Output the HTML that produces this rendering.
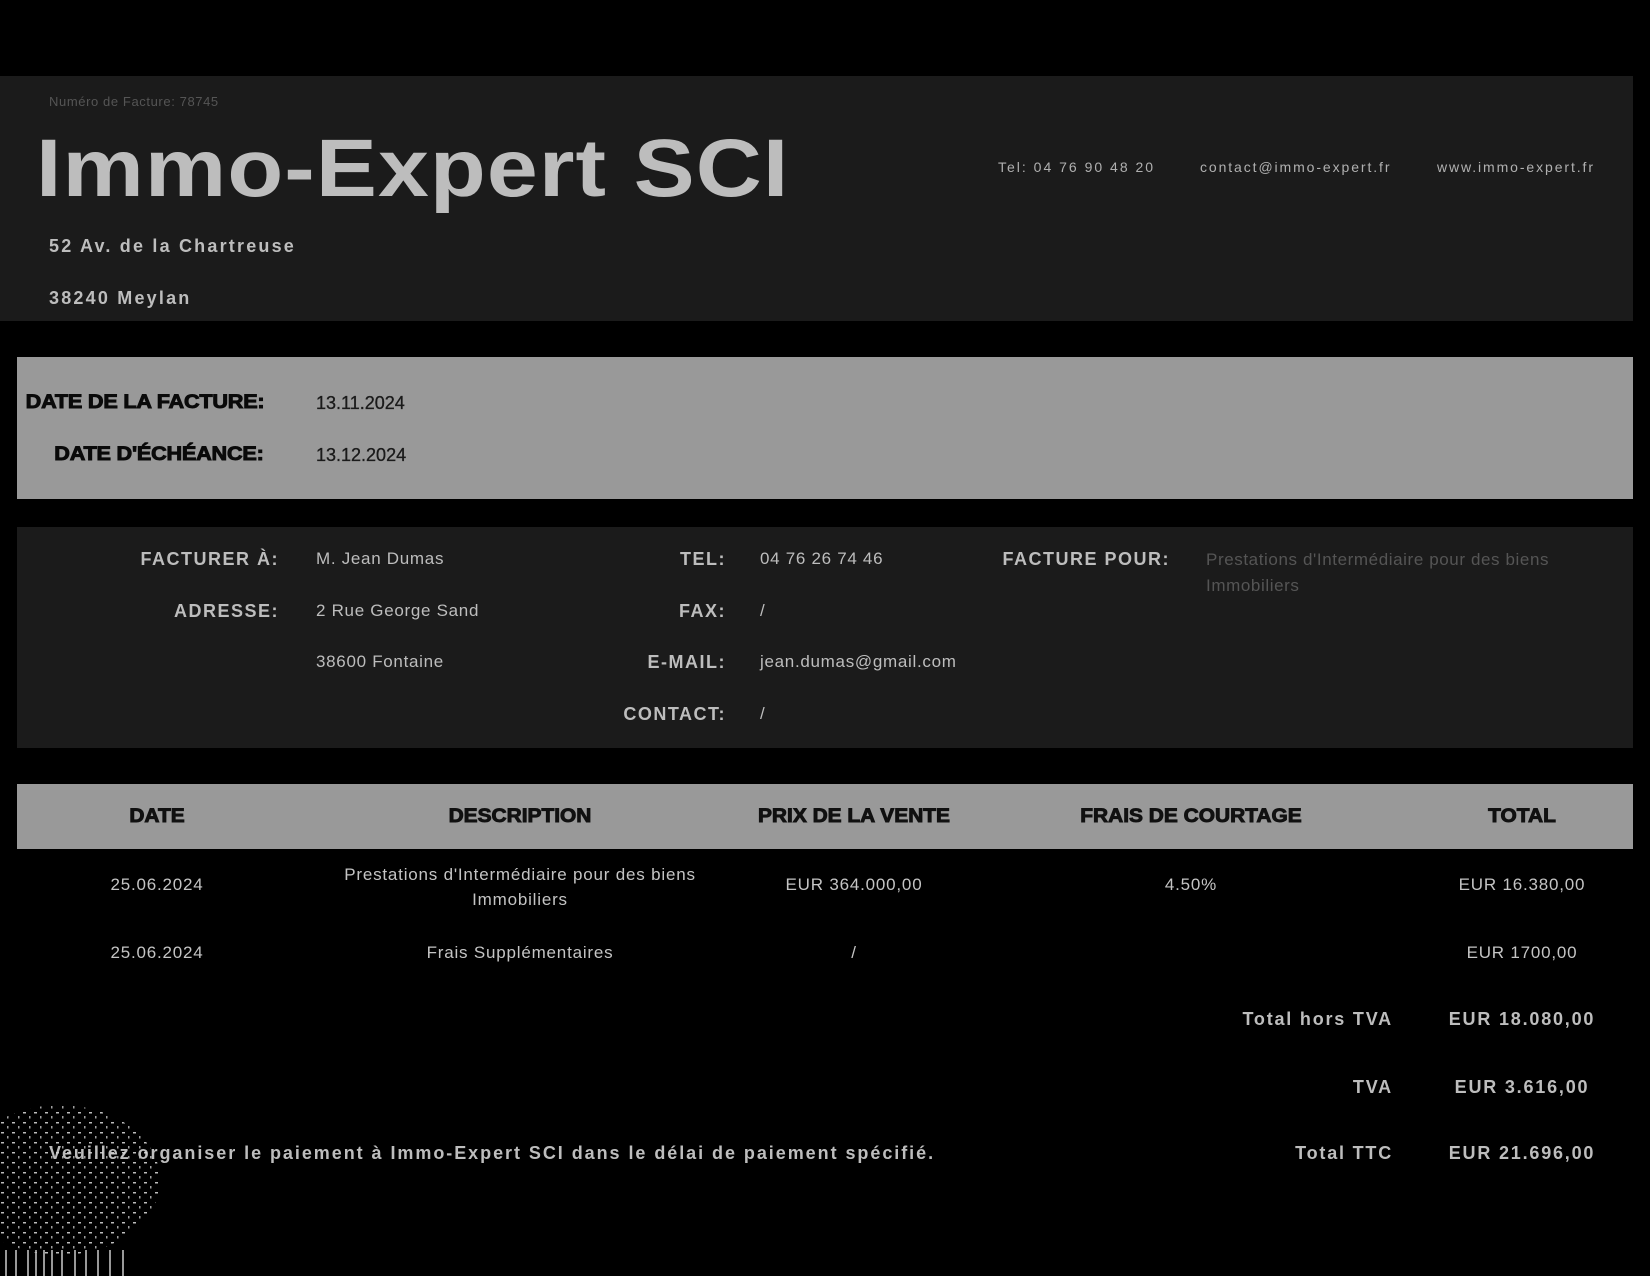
<!DOCTYPE html>
<html><head><meta charset="utf-8"><style>
*{margin:0;padding:0;box-sizing:border-box}
body{width:1650px;height:1276px;background:#000;position:relative;overflow:hidden;font-family:"Liberation Sans",sans-serif}
.a{position:absolute;white-space:nowrap}
.box{position:absolute}
.lbl{font-weight:bold;color:#bdbdbd;font-size:18px;letter-spacing:1.5px;text-align:right}
.val{color:#bdbdbd;font-size:17px;letter-spacing:0.7px}
.blk{font-weight:900;color:#0a0a0a;font-size:19px;-webkit-text-stroke:0.9px #0a0a0a;letter-spacing:-0.2px;transform:scaleX(1.14);transform-origin:right center}
.th{font-weight:900;color:#111;font-size:19px;-webkit-text-stroke:0.9px #111;text-align:center;width:400px;margin-left:-200px;transform:scaleX(1.1)}
.td{color:#c4c4c4;font-size:17px;text-align:center;width:420px;margin-left:-210px;letter-spacing:0.8px}
.tl{font-weight:bold;color:#bdbdbd;font-size:18px;letter-spacing:1.8px}
</style></head><body>
<div class="box" style="left:0;top:76px;width:1633px;height:245px;background:#1b1b1b"></div>
<div class="a" style="left:49px;top:94px;font-size:13px;color:#555;letter-spacing:0.6px">Numéro de Facture: 78745</div>
<div class="a" style="left:36px;top:122px;font-size:82px;font-weight:bold;color:#bdbdbd;letter-spacing:1px;transform:scaleX(1.115);transform-origin:left center">Immo-Expert SCI</div>
<div class="a" style="left:49px;top:236px;font-size:18px;font-weight:bold;color:#bdbdbd;letter-spacing:2.2px">52 Av. de la Chartreuse</div>
<div class="a" style="left:49px;top:288px;font-size:18px;font-weight:bold;color:#bdbdbd;letter-spacing:2.2px">38240 Meylan</div>
<div class="a" style="left:998px;top:159px;font-size:14px;color:#b0b0b0;letter-spacing:2px">Tel: 04 76 90 48 20</div>
<div class="a" style="left:1200px;top:159px;font-size:14px;color:#b0b0b0;letter-spacing:1.9px">contact@immo-expert.fr</div>
<div class="a" style="left:1437px;top:159px;font-size:14px;color:#b0b0b0;letter-spacing:1.9px">www.immo-expert.fr</div>

<div class="box" style="left:17px;top:357px;width:1616px;height:142px;background:#999"></div>
<div class="a blk" style="right:1386px;top:392px">DATE DE LA FACTURE:</div>
<div class="a blk" style="right:1386px;top:444px">DATE D'ÉCHÉANCE:</div>
<div class="a" style="left:316px;top:393px;font-size:18px;color:#1a1a1a;-webkit-text-stroke:0.3px #1a1a1a">13.11.2024</div>
<div class="a" style="left:316px;top:445px;font-size:18px;color:#1a1a1a;-webkit-text-stroke:0.3px #1a1a1a">13.12.2024</div>

<div class="box" style="left:17px;top:527px;width:1616px;height:221px;background:#1b1b1b"></div>
<div class="a lbl" style="right:1371px;top:549px">FACTURER À:</div>
<div class="a lbl" style="right:1371px;top:601px">ADRESSE:</div>
<div class="a val" style="left:316px;top:549px">M. Jean Dumas</div>
<div class="a val" style="left:316px;top:601px">2 Rue George Sand</div>
<div class="a val" style="left:316px;top:652px">38600 Fontaine</div>
<div class="a lbl" style="right:924px;top:549px">TEL:</div>
<div class="a lbl" style="right:924px;top:601px">FAX:</div>
<div class="a lbl" style="right:924px;top:652px">E-MAIL:</div>
<div class="a lbl" style="right:924px;top:704px">CONTACT:</div>
<div class="a val" style="left:760px;top:549px">04 76 26 74 46</div>
<div class="a val" style="left:760px;top:601px">/</div>
<div class="a val" style="left:760px;top:652px">jean.dumas@gmail.com</div>
<div class="a val" style="left:760px;top:704px">/</div>
<div class="a lbl" style="right:480px;top:549px">FACTURE POUR:</div>
<div class="a" style="left:1206px;top:547px;font-size:17px;color:#555;line-height:26px;white-space:normal;width:400px;letter-spacing:0.6px">Prestations d'Intermédiaire pour des biens Immobiliers</div>

<div class="box" style="left:17px;top:784px;width:1616px;height:65px;background:#999"></div>
<div class="a th" style="left:157px;top:806px">DATE</div>
<div class="a th" style="left:520px;top:806px">DESCRIPTION</div>
<div class="a th" style="left:854px;top:806px">PRIX DE LA VENTE</div>
<div class="a th" style="left:1191px;top:806px">FRAIS DE COURTAGE</div>
<div class="a th" style="left:1522px;top:806px">TOTAL</div>

<div class="a td" style="left:157px;top:875px">25.06.2024</div>
<div class="a td" style="left:520px;top:862px;white-space:normal;line-height:25px">Prestations d'Intermédiaire pour des biens<br>Immobiliers</div>
<div class="a td" style="left:854px;top:875px">EUR 364.000,00</div>
<div class="a td" style="left:1191px;top:875px">4.50%</div>
<div class="a td" style="left:1522px;top:875px">EUR 16.380,00</div>
<div class="a td" style="left:157px;top:943px">25.06.2024</div>
<div class="a td" style="left:520px;top:943px">Frais Supplémentaires</div>
<div class="a td" style="left:854px;top:943px">/</div>
<div class="a td" style="left:1522px;top:943px">EUR 1700,00</div>

<div class="a tl" style="right:257px;top:1009px">Total hors TVA</div>
<div class="a tl" style="right:257px;top:1077px">TVA</div>
<div class="a tl" style="right:257px;top:1143px">Total TTC</div>
<div class="a tl" style="left:1322px;width:400px;text-align:center;top:1009px">EUR 18.080,00</div>
<div class="a tl" style="left:1322px;width:400px;text-align:center;top:1077px">EUR 3.616,00</div>
<div class="a tl" style="left:1322px;width:400px;text-align:center;top:1143px">EUR 21.696,00</div>
<div class="a tl" style="left:49px;top:1143px;letter-spacing:1.95px">Veuillez organiser le paiement à Immo-Expert SCI dans le délai de paiement spécifié.</div>

<svg class="a" style="left:0;top:1100px" width="170" height="176">
<defs><pattern id="d" width="11" height="10" patternUnits="userSpaceOnUse"><rect x="1" y="2" width="3" height="1.5" fill="#ddd"/><rect x="7" y="6" width="1.5" height="2.5" fill="#bbb"/></pattern></defs>
<ellipse cx="60" cy="80" rx="100" ry="75" fill="url(#d)" opacity="0.85"/>
<g stroke="#ccc" stroke-width="1.5"><line x1="6" y1="150" x2="6" y2="176"/><line x1="16" y1="150" x2="16" y2="176"/><line x1="28" y1="150" x2="28" y2="176"/><line x1="36" y1="150" x2="36" y2="176"/><line x1="44" y1="150" x2="44" y2="176"/><line x1="52" y1="150" x2="52" y2="176"/><line x1="62" y1="150" x2="62" y2="176"/><line x1="75" y1="150" x2="75" y2="176"/><line x1="86" y1="150" x2="86" y2="176"/><line x1="98" y1="150" x2="98" y2="176"/><line x1="110" y1="150" x2="110" y2="176"/><line x1="123" y1="150" x2="123" y2="176"/></g>
</svg>
</body></html>
